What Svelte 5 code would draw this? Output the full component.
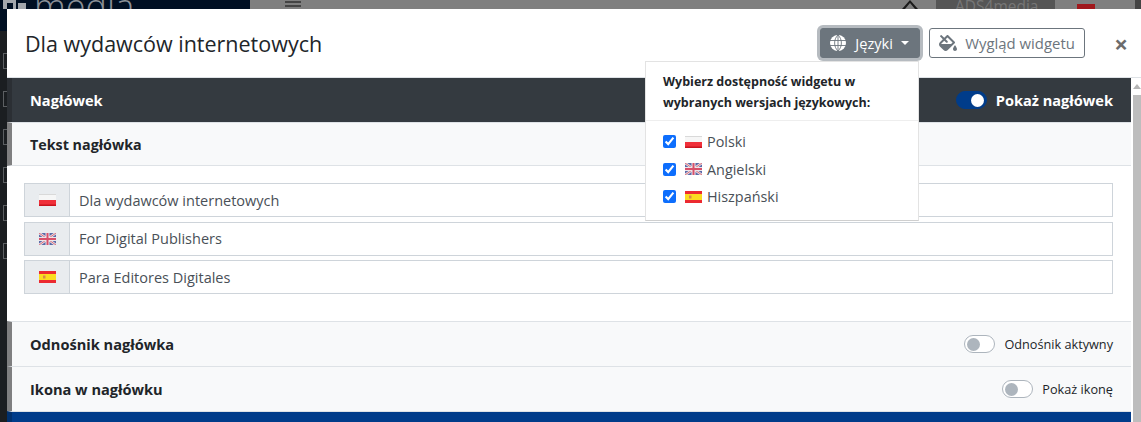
<script lang="ts">
	let languages = [
		{ name: "Polski", code: "pl", checked: true, value: "Dla wydawców internetowych" },
		{ name: "Angielski", code: "en", checked: true, value: "For Digital Publishers" },
		{ name: "Hiszpański", code: "es", checked: true, value: "Para Editores Digitales" },
	];
</script>

{#snippet flag(code: string)}
	<svg class="flag" width="17" height="12" viewBox="0 0 17 12">
		{#if code === "pl"}
			<rect width="17" height="6" fill="#f6f6f6" />
			<rect y="6" width="17" height="6" fill="#f0303a" />
			<rect y="10.5" width="17" height="1.5" fill="#c8141e" />
			<rect width="17" height="1" fill="#d9d9d9" />
		{:else if code === "en"}
			<rect width="17" height="12" fill="#5a6aa8" />
			<path d="M0 0 17 12M17 0 0 12" stroke="#e8dfe4" stroke-width="2.6" />
			<path d="M0 0 17 12M17 0 0 12" stroke="#d9707f" stroke-width="1" />
			<path d="M8.5 0V12M0 6H17" stroke="#ece6ea" stroke-width="4" />
			<path d="M8.5 0V12M0 6H17" stroke="#d8506a" stroke-width="2" />
		{:else}
			<rect width="17" height="12" fill="#ec2a30" />
			<rect y="3" width="17" height="6" fill="#fbdc20" />
			<rect x="4" y="4.5" width="2.5" height="3" fill="#d98a4a" />
		{/if}
	</svg>
{/snippet}

<div class="page">
	<div class="behind">
		<div class="brand">
			<svg width="26" height="9" viewBox="0 0 26 9">
				<path d="M3 0H16V9H3ZM7 3V9H13V3Z M18 3H26V9H18Z" fill="#a3a7ac" fill-rule="evenodd" />
			</svg>
			<span>media</span>
		</div>
		<span class="burger"></span>
		<svg class="user" width="16" height="9" viewBox="0 0 16 9">
			<path d="M8 0 16 9H13L8 3 3 9H0Z" fill="#1c1c1c" />
		</svg>
		<span class="ads">ADS4media</span>
		<span class="red"></span>
		<span class="corner"></span>
	</div>

	<div class="main">
		<div class="rail">
			<span class="rail-top"></span>
			<span class="rail-icon"></span>
			<span class="rail-icon"></span>
			<span class="rail-icon"></span>
			<span class="rail-icon"></span>
			<span class="rail-icon"></span>
			<span class="rail-icon"></span>
		</div>

		<div class="modal">
			<header>
				<h1>Dla wydawców internetowych</h1>
				<div class="actions">
					<button class="btn-lang">
						<svg width="16" height="16" viewBox="0 0 16 16" fill="none">
							<circle cx="8" cy="8" r="8" fill="#fff" />
							<path d="M0 5.5H16M0 10.5H16M8 0V16M8 0C3.5 4 3.5 12 8 16M8 0C12.5 4 12.5 12 8 16" stroke="#6c757d" stroke-width="0.9" />
						</svg>
						<span>Języki</span>
						<span class="caret"></span>
					</button>
					<button class="btn-look">
						<svg width="18" height="16" viewBox="0 0 576 512">
							<path fill="#6c757d" d="M512 320s-64 92.65-64 128c0 35.35 28.66 64 64 64s64-28.65 64-64-64-128-64-128zm-9.37-102.94L294.94 9.37C288.69 3.12 280.5 0 272.31 0s-16.38 3.12-22.62 9.37l-81.58 81.58L81.93 4.76c-6.25-6.25-16.38-6.25-22.62 0L36.69 27.38c-6.24 6.25-6.24 16.38 0 22.62l86.19 86.18-94.76 94.76c-37.49 37.48-37.49 98.26 0 135.75l117.19 117.19c18.74 18.74 43.31 28.12 67.87 28.12 24.57 0 49.13-9.37 67.87-28.12l221.57-221.57c12.5-12.5 12.5-32.75.01-45.25zm-116.22 70.97H65.93c1.36-3.84 3.57-7.98 7.43-11.83l13.15-13.15 81.61-81.61 58.6 58.6c12.49 12.49 32.75 12.49 45.24 0 12.49-12.49 12.49-32.75 0-45.24l-58.6-58.6 58.95-58.95 162.44 162.44-48.34 48.34z" />
						</svg>
						<span>Wygląd widgetu</span>
					</button>
					<span class="close">×</span>
				</div>
			</header>

			<div class="scroll">
				<div class="content">
					<div class="bar">
						<strong>Nagłówek</strong>
						<div class="switch-row">
							<span class="switch on"></span>
							<strong>Pokaż nagłówek</strong>
						</div>
					</div>

					<div class="sub-title">Tekst nagłówka</div>
					<div class="fields">
						{#each languages as lang}
							<div class="field">
								<span class="addon">{@render flag(lang.code)}</span>
								<input type="text" value={lang.value} />
							</div>
						{/each}
					</div>

					<div class="row">
						<strong>Odnośnik nagłówka</strong>
						<div class="switch-row small">
							<span class="switch"></span>
							<span>Odnośnik aktywny</span>
						</div>
					</div>
					<div class="row">
						<strong>Ikona w nagłówku</strong>
						<div class="switch-row small">
							<span class="switch"></span>
							<span>Pokaż ikonę</span>
						</div>
					</div>
					<div class="blue"></div>
				</div>

				<div class="scrollbar">
					<span class="arrow"></span>
					<span class="thumb"></span>
				</div>
			</div>

			<div class="menu">
				<p>Wybierz dostępność widgetu w wybranych wersjach językowych:</p>
				<ul>
					{#each languages as lang}
						<li>
							<input type="checkbox" checked={lang.checked} />
							{@render flag(lang.code)}
							<span>{lang.name}</span>
						</li>
					{/each}
				</ul>
			</div>
		</div>
	</div>
</div>

<style>
	:global(body) {
		margin: 0;
		background: #1b1e21;
		overflow: hidden;
	}

	.page {
		display: flex;
		flex-direction: column;
		height: 422px;
		font-family: "Open Sans", "Noto Sans", sans-serif;
		color: #212529;
		overflow: hidden;
	}

	.behind {
		display: flex;
		flex: none;
		height: 9px;
		background: #7f7f7f;
		overflow: hidden;
	}

	.brand {
		display: flex;
		flex: none;
		gap: 8px;
		width: 250px;
		background: #000f22;
		color: #8b9097;
		font-size: 36px;
		font-weight: 300;
		line-height: 14px;
	}

	.burger {
		flex: none;
		width: 16px;
		height: 2px;
		margin: 1px 0 0 35px;
		background: #444;
		box-shadow: 0 4px 0 #444;
	}

	.user {
		flex: none;
		margin-left: 601px;
	}

	.ads {
		flex: none;
		box-sizing: border-box;
		width: 119px;
		margin-left: 18px;
		padding-left: 19px;
		background: #555;
		color: #777;
		font-size: 15.5px;
		line-height: 12px;
	}

	.red {
		flex: none;
		width: 18px;
		height: 5px;
		margin: 4px 0 0 22px;
		background: #a0181c;
	}

	.corner {
		flex: none;
		width: 6px;
		margin-left: 40px;
		background: #444;
	}

	.main {
		display: flex;
		flex: 1;
		min-height: 0;
	}

	.rail {
		display: flex;
		flex: none;
		flex-direction: column;
		gap: 22px;
		width: 7px;
		overflow: hidden;
	}

	.rail-top {
		flex: none;
		height: 22px;
		background: #000f22;
	}

	.rail-icon {
		flex: none;
		box-sizing: border-box;
		width: 10px;
		height: 16px;
		margin-left: 3px;
		border: 1px solid #5c5f62;
	}

	.modal {
		position: relative;
		flex: 1;
		min-width: 0;
		background: #fff;
	}

	header {
		display: flex;
		align-items: center;
		justify-content: space-between;
		height: 68px;
		padding: 0 13px 0 18px;
	}

	h1 {
		margin: 0;
		font-size: 21.5px;
		font-weight: 400;
	}

	.actions {
		display: flex;
		align-items: center;
	}

	button {
		display: flex;
		align-items: center;
		box-sizing: border-box;
		height: 30px;
		font-family: inherit;
		border-radius: 3px;
	}

	.btn-lang {
		gap: 9px;
		width: 100px;
		padding: 0 0 0 9px;
		margin-right: 9px;
		background: #6c757d;
		border: 1px solid #6c757d;
		color: #fff;
		font-size: 14.6px;
		box-shadow: 0 0 0 3px #b6bbc0;
	}

	.caret {
		width: 0;
		height: 0;
		margin-left: -1px;
		border: 4.5px solid transparent;
		border-top-color: #fff;
		border-bottom: 0;
	}

	.btn-look {
		gap: 8px;
		width: 156px;
		padding: 0 0 0 9px;
		background: #fff;
		border: 1px solid #6c757d;
		color: #6c757d;
		font-size: 14.9px;
	}

	.close {
		margin: 2px 0 0 29px;
		color: #6c6c6c;
		font-size: 24px;
		font-weight: 700;
		line-height: 20px;
	}

	.scroll {
		display: flex;
		border-top: 1px solid #dee2e6;
	}

	.content {
		flex: 1;
		min-width: 0;
	}

	.scrollbar {
		display: flex;
		flex: none;
		flex-direction: column;
		align-items: flex-end;
		box-sizing: border-box;
		width: 10px;
		height: 344px;
		background: #fff;
	}

	.arrow {
		flex: none;
		width: 0;
		height: 0;
		margin: 6px 0 0;
		border: 4px solid transparent;
		border-bottom: 5px solid #b5b5b5;
		border-top: 0;
	}

	.thumb {
		flex: 1;
		width: 8px;
		margin-top: 6px;
		background: #bdbdbd;
	}

	.bar {
		display: flex;
		align-items: center;
		justify-content: space-between;
		height: 44px;
		padding: 0 18px;
		background: #343a40;
		border-left: 5px solid #2b2f34;
		color: #fff;
		font-size: 14.6px;
	}

	.switch-row {
		display: flex;
		align-items: center;
		gap: 9px;
	}

	.switch-row.small {
		font-size: 12.7px;
	}

	.switch {
		position: relative;
		display: block;
		box-sizing: border-box;
		width: 31px;
		height: 18px;
		border: 1px solid #adb5bd;
		border-radius: 9px;
		background: #fff;
	}

	.switch::after {
		content: "";
		position: absolute;
		left: 2px;
		top: 1.5px;
		width: 13px;
		height: 13px;
		border-radius: 50%;
		background: #adb5bd;
	}

	.switch.on {
		background: #003c8a;
		border-color: #003c8a;
	}

	.switch.on::after {
		left: 14px;
		background: #fff;
	}

	.sub-title {
		display: flex;
		align-items: center;
		height: 42px;
		padding-left: 18px;
		background: #f8f9fa;
		border-top: 1px solid #dee2e6;
		border-bottom: 1px solid #dee2e6;
		border-left: 5px solid #7f7f80;
		font-size: 14.3px;
		font-weight: 700;
	}

	.fields {
		display: flex;
		flex-direction: column;
		gap: 4.5px;
		padding: 17px 18px 27px 17px;
	}

	.field {
		display: flex;
		height: 34px;
	}

	.addon {
		display: flex;
		align-items: center;
		justify-content: center;
		box-sizing: border-box;
		width: 45px;
		background: #e9ecef;
		border: 1px solid #ced4da;
		border-right: 0;
	}

	.field input {
		flex: 1;
		box-sizing: border-box;
		padding: 0 9px;
		border: 1px solid #ced4da;
		color: #495057;
		font-family: inherit;
		font-size: 14.5px;
		outline: none;
	}

	.row {
		display: flex;
		align-items: center;
		justify-content: space-between;
		box-sizing: border-box;
		height: 45px;
		padding: 0 18px;
		background: #f8f9fa;
		border-top: 1px solid #dee2e6;
		border-left: 5px solid #7f7f80;
		font-size: 14.6px;
	}

	.blue {
		height: 11px;
		background: #003c8a;
		border-top: 1px solid #dee2e6;
		border-left: 5px solid #00306e;
	}

	.menu {
		position: absolute;
		left: 638px;
		top: 52px;
		box-sizing: border-box;
		width: 274px;
		background: #fff;
		border: 1px solid #e3e3e3;
		border-bottom-color: #cfcfcf;
		font-size: 14.4px;
	}

	.menu p {
		margin: 0;
		padding: 8.5px 17px 7px;
		border-bottom: 1px solid #eee;
		font-size: 12.5px;
		font-weight: 700;
		line-height: 21px;
	}

	ul {
		display: flex;
		flex-direction: column;
		gap: 7.5px;
		margin: 0;
		padding: 11px 17px 13px;
		list-style: none;
	}

	li {
		display: flex;
		align-items: center;
		height: 20px;
		color: #495057;
	}

	li input {
		width: 13px;
		height: 13px;
		margin: 0 9px 0 0;
		accent-color: #0d6efd;
	}

	li .flag {
		margin-right: 5px;
	}
</style>
